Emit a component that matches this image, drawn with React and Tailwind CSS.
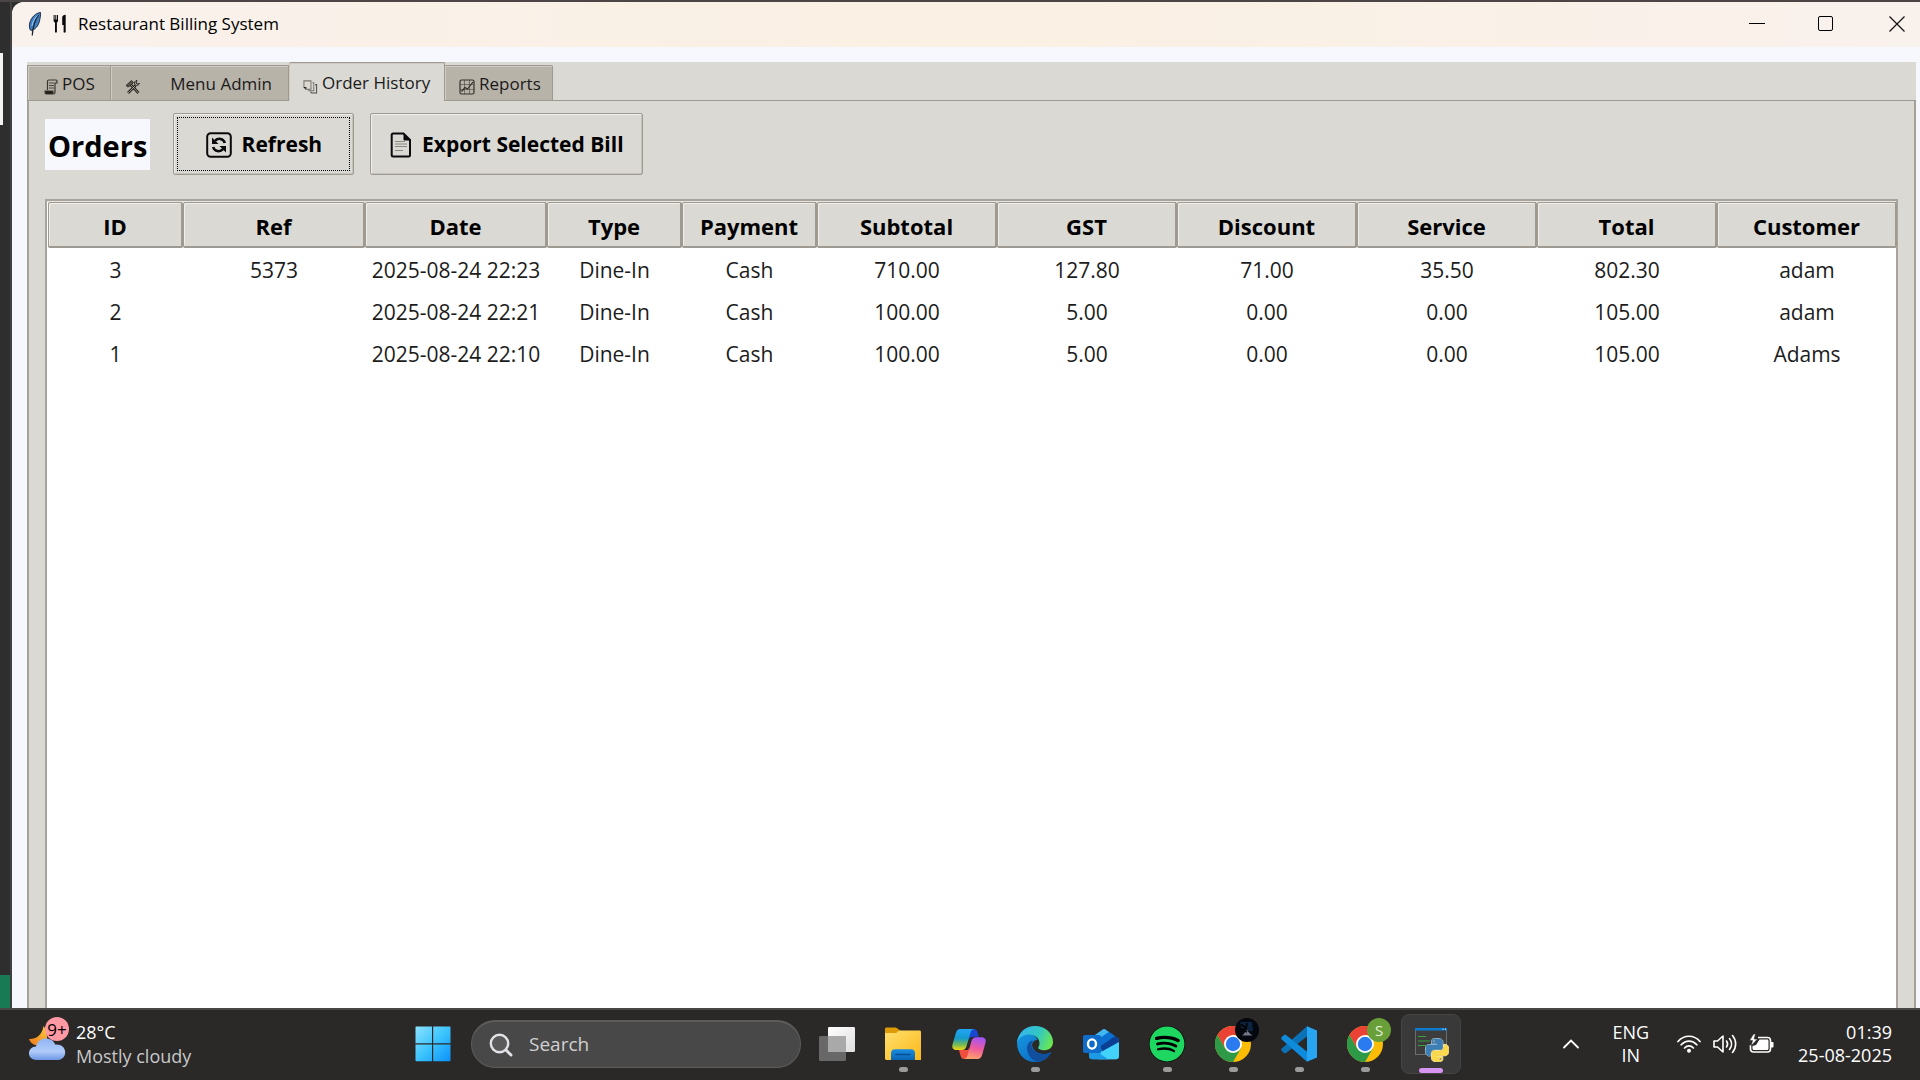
import { FaSpotify } from "react-icons/fa";

const columns = [
  { name: "ID", width: "w-[135px]" },
  { name: "Ref", width: "w-[182px]" },
  { name: "Date", width: "w-[182px]" },
  { name: "Type", width: "w-[135px]" },
  { name: "Payment", width: "w-[135px]" },
  { name: "Subtotal", width: "w-[180px]" },
  { name: "GST", width: "w-[180px]" },
  { name: "Discount", width: "w-[180px]" },
  { name: "Service", width: "w-[180px]" },
  { name: "Total", width: "w-[180px]" },
  { name: "Customer", width: "w-[180px]" },
];

const orders = [
  ["3", "5373", "2025-08-24 22:23", "Dine-In", "Cash", "710.00", "127.80", "71.00", "35.50", "802.30", "adam"],
  ["2", "", "2025-08-24 22:21", "Dine-In", "Cash", "100.00", "5.00", "0.00", "0.00", "105.00", "adam"],
  ["1", "", "2025-08-24 22:10", "Dine-In", "Cash", "100.00", "5.00", "0.00", "0.00", "105.00", "Adams"],
];

/* ---------- title bar and tab icons ---------- */

function FeatherIcon() {
  return (
    <svg width="14" height="24" viewBox="0 0 14 24" aria-hidden="true">
      <path d="M12.5 0.5C8 1 3.5 5 2 10c-.9 3-.8 5.500.3 8l1.500.5C9 16.500 11 12 11.800 7.500 12.200 5 12.800 3 12.500.5Z" fill="#3f7fc4" stroke="#24303f" strokeWidth="1" />
      <path d="M10.500 3C7 8 4.800 13 4.300 23.500" fill="none" stroke="#1c2430" strokeWidth="1.300" />
      <path d="M9.500 3.500C6.500 6.500 4.500 10 4 14" fill="none" stroke="#9cc8f4" strokeWidth="1" />
    </svg>
  );
}

function CutleryIcon() {
  return (
    <svg width="14" height="20" viewBox="0 0 14 20" fill="#0a0a0a" aria-hidden="true">
      <path d="M0.600 1h1v4.500h.7V1h1v4.500h.7V1h1v5.500c0 1-.5 1.600-1.100 2v9.300c0 1.200-1.900 1.200-1.900 0V8.500c-.8-.4-1.400-1-1.400-2Z" />
      <path d="M9.200 3.500C9.200 2 10.500 1 12.700.8v17c0 1.200-2.100 1.200-2.100 0V11H9.200Z" />
    </svg>
  );
}

function ReceiptIcon() {
  return (
    <svg width="14" height="16" viewBox="0 0 14 16" fill="none" stroke="#3a362f" strokeWidth="1.200" aria-hidden="true">
      <path d="M3.500 11V2.500C3.500 1.600 4 1 5 1h7c.7 0 1 .5 1 1.200V4h-2v9c0 1.200-.5 2-1.500 2" />
      <path d="M5 4h5M5 6.500h5M5 9h5" strokeWidth="0.900" />
      <path d="M1 12h8v3H2.300C1.400 15 1 14 1 12Z" fill="#1f1c18" />
    </svg>
  );
}

function ToolsIcon() {
  return (
    <svg width="16" height="16" viewBox="0 0 16 16" fill="none" stroke="#26231f" aria-hidden="true">
      <path d="M5.500 5.500 13.500 14M10.500 6.500 3 14" strokeWidth="2.600" />
      <path d="M5.500 5.500 13.500 14M10 7 3 14" stroke="#b8b3a9" strokeWidth="0.800" />
      <path d="M1 6.500 6.500 1.500 8.500 3.500 6 6 3 8Z" fill="#5b564e" strokeWidth="0.900" />
      <path d="M12 1.500c-2 .3-3 2-2.300 3.800.8 1.500 3.500 1.700 4.800-.8L12.300 5 11 4Z" strokeWidth="1" />
    </svg>
  );
}

function PagesIcon() {
  return (
    <svg width="15" height="15" viewBox="0 0 16 16" fill="none" stroke="#7b776f" strokeWidth="1.100" aria-hidden="true">
      <path d="M1 2h7.500v9H3L1 9Z" />
      <path d="M10 4h1.500v8.500H6.500L5 11" />
      <path d="M13 6h1.500v9H9l-1-1.500" stroke="#54514b" />
      <path d="M1 9h2v2" stroke="#26231f" />
    </svg>
  );
}

function ChartIcon() {
  return (
    <svg width="16" height="16" viewBox="0 0 16 16" fill="none" stroke="#34312c" aria-hidden="true">
      <rect x="1" y="1" width="14" height="14" rx="1.500" strokeWidth="1.200" />
      <path d="M1 5.500h14M1 10.500h14M5.500 1v14M10.500 1v14" strokeWidth="0.500" />
      <path d="M2.500 12.500 6 8.500 8.500 10 14 3" strokeWidth="1.200" />
    </svg>
  );
}

function RefreshIcon() {
  return (
    <svg width="26" height="26" viewBox="0 0 26 26" fill="none" stroke="#0b0b0b" aria-hidden="true">
      <rect x="1.200" y="1.200" width="23.600" height="23.600" rx="3.500" strokeWidth="2" />
      <path d="M9 8.800C12 5.600 17.500 6.300 18.800 11" strokeWidth="2.600" />
      <path d="M17 17.200c-3 3.200-8.500 2.500-9.800-2.200" strokeWidth="2.600" />
      <path d="M6 5.500V12h6.500ZM20 20.500V14h-6.500Z" fill="#0b0b0b" stroke="none" />
    </svg>
  );
}

function PageIcon() {
  return (
    <svg width="22" height="26" viewBox="0 0 22 26" fill="none" stroke="#0b0b0b" aria-hidden="true">
      <path d="M3.200 1.500h10.300L20 8v15c0 .9-.6 1.500-1.500 1.500H3.200c-.9 0-1.500-.6-1.500-1.500V3c0-.9.6-1.500 1.500-1.500Z" strokeWidth="2" />
      <path d="M14 2v6h6Z" fill="#0b0b0b" strokeWidth="1" />
      <path d="M5 9.500h10M5 12h12M5 14.500h12M5 18.500h8" stroke="#8b8882" strokeWidth="1.200" />
    </svg>
  );
}

/* ---------- taskbar icons ---------- */

function WeatherIcon() {
  return (
    <svg width="37" height="44" viewBox="0 0 37 44" aria-hidden="true">
      <defs>
        <linearGradient id="cloud" x1="0" y1="0" x2="0" y2="1">
          <stop offset="0" stopColor="#8fb4f2" />
          <stop offset="0.600" stopColor="#b0cbfa" />
          <stop offset="1" stopColor="#6f97e6" />
        </linearGradient>
        <linearGradient id="moon" x1="0" y1="1" x2="1" y2="0">
          <stop offset="0" stopColor="#f07a1c" />
          <stop offset="1" stopColor="#fcc93a" />
        </linearGradient>
      </defs>
      <path d="M14.500 9c3 3 4.500 12 3 19H6C3 27 1 25 0 22c6 .5 13-3 14.500-13Z" fill="url(#moon)" />
      <path d="M7.500 43C3 43 0 40.200 0 36.300c0-3.600 2.900-6.600 7-6.700C8 24.600 12 21.500 16.800 21.500c4.500 0 8 2.300 9.400 6 5.800-.6 10 2.800 10 7.700 0 4.600-3.200 7.800-8 7.800Z" fill="url(#cloud)" />
    </svg>
  );
}

function StartIcon() {
  return (
    <svg width="36" height="36" viewBox="0 0 36 36" aria-hidden="true">
      <defs>
        <linearGradient id="start" x1="0" y1="0" x2="36" y2="36" gradientUnits="userSpaceOnUse">
          <stop offset="0" stopColor="#8fe3ff" />
          <stop offset="0.500" stopColor="#3cc4fd" />
          <stop offset="1" stopColor="#0a8ffb" />
        </linearGradient>
      </defs>
      <path d="M1.500.5H17v16.700H.5V1.500c0-.6.4-1 1-1ZM18.200.5h16.300c.6 0 1 .4 1 1v15.700H18.200ZM.5 18.500H17v16.800H1.500c-.6 0-1-.4-1-1ZM18.200 18.500h17.300v15.800c0 .6-.4 1-1 1H18.200Z" fill="url(#start)" />
    </svg>
  );
}

function SearchIcon() {
  return (
    <svg className="shrink-0" width="24" height="24" viewBox="0 0 24 24" fill="none" stroke="#e2e2e6" aria-hidden="true">
      <circle cx="10.500" cy="10.500" r="8.700" fill="#5a5a5a" strokeWidth="2.400" />
      <path d="m17 17 5 5" strokeWidth="3" strokeLinecap="round" />
    </svg>
  );
}

function TaskViewIcon() {
  return (
    <svg width="36" height="36" viewBox="0 0 36 36" aria-hidden="true">
      <defs>
        <linearGradient id="pane" x1="0" y1="0" x2="1" y2="1">
          <stop offset="0" stopColor="#ffffff" />
          <stop offset="1" stopColor="#dedede" />
        </linearGradient>
      </defs>
      <rect x="9" y="1" width="27" height="25" rx="1.200" fill="url(#pane)" />
      <rect x="0" y="10" width="27" height="25" rx="1.200" fill="#686868" />
      <path d="M9 10h18v16H9Z" fill="#a9a9a9" />
    </svg>
  );
}

function ExplorerIcon() {
  return (
    <svg width="36" height="36" viewBox="0 0 36 36" aria-hidden="true">
      <defs>
        <linearGradient id="folder" x1="0" y1="0" x2="1" y2="1">
          <stop offset="0" stopColor="#ffdf70" />
          <stop offset="1" stopColor="#fbb816" />
        </linearGradient>
        <linearGradient id="folderdock" x1="0" y1="0" x2="0" y2="1">
          <stop offset="0" stopColor="#1a8de0" />
          <stop offset="1" stopColor="#0a64b4" />
        </linearGradient>
      </defs>
      <path d="M0 9V3c0-1 .6-1.600 1.500-1.600h8.800c.8 0 1.300.2 1.900.8L15 4.500V9Z" fill="#dd9b05" />
      <path d="M0 7h11l3.500-2.600h20c.9 0 1.500.6 1.500 1.500V34H1.500C.6 34 0 33.500 0 32.600Z" fill="url(#folder)" />
      <path d="M6 34v-7c0-2.200 1.600-3.700 3.800-3.700h16.400c2.200 0 3.800 1.500 3.800 3.700v7Z" fill="url(#folderdock)" />
      <path d="M11 28.500h14" stroke="#074f92" strokeWidth="1.600" strokeLinecap="round" />
    </svg>
  );
}

function CopilotIcon() {
  return (
    <svg width="36" height="36" viewBox="0 0 36 36" aria-hidden="true">
      <defs>
        <linearGradient id="cpleft" x1="0" y1="0" x2="0" y2="1">
          <stop offset="0" stopColor="#22a5f7" />
          <stop offset="0.450" stopColor="#159bc9" />
          <stop offset="0.750" stopColor="#75bb51" />
          <stop offset="1" stopColor="#f5d517" />
        </linearGradient>
        <linearGradient id="cpright" x1="0.600" y1="0" x2="0.400" y2="1">
          <stop offset="0" stopColor="#a455f7" />
          <stop offset="0.500" stopColor="#ee5a9e" />
          <stop offset="1" stopColor="#ffa06a" />
        </linearGradient>
      </defs>
      <path d="M18 3h5c2 0 3 1.500 3.500 3.200l1.300 4.600h-5c-3 0-4 1.500-5 4.500Z" fill="#1947d2" />
      <path d="M18 33h-5c-2 0-3-1.500-3.500-3.200L8 24h5c3 0 4-1.500 5-4.500Z" fill="#f04f3e" />
      <path d="M9.500 3H23c-2 .3-3 1.700-3.700 4.200l-3.500 12.300c-.8 3-2.300 4.500-5 4.500H5.500C2 24 .6 21.600 1.500 18.500L4.800 7.200C5.600 4.500 7 3 9.500 3Z" fill="url(#cpleft)" />
      <path d="M26.500 33H13c2-.3 3-1.700 3.700-4.200l3.500-13c.8-3 2.300-4.500 5-4.500h5.300c3.500 0 4.900 2.400 4 5.500l-3.300 12c-.8 2.700-2.200 4.200-4.700 4.200Z" fill="url(#cpright)" />
      <path d="M18.800 11.500h3.200c-1.200.8-1.700 2-2.200 4L17.200 24h-3.600c1.200-.8 1.800-2 2.300-4Z" fill="#2a2928" />
    </svg>
  );
}

function EdgeIcon() {
  return (
    <svg width="36" height="36" viewBox="0 0 36 36" aria-hidden="true">
      <defs>
        <linearGradient id="edgetop" x1="0" y1="0.300" x2="1" y2="0.600">
          <stop offset="0" stopColor="#35b4f0" />
          <stop offset="0.550" stopColor="#31c7c3" />
          <stop offset="1" stopColor="#6be84f" />
        </linearGradient>
        <linearGradient id="edgemain" x1="0" y1="0" x2="1" y2="1">
          <stop offset="0" stopColor="#1696e0" />
          <stop offset="1" stopColor="#0965bf" />
        </linearGradient>
      </defs>
      <path d="M0 17C0 10 5 8 12 8c4 0 7 2.500 8.500 6-3 0-5.500 2-5.500 5.500 1 5 6 8.500 11.500 8.500 3 0 5-.9 6.300-1.600.8-.3 1.100.3.700 1C30.500 32.500 25.500 36 18 36 8 36 0 28.500 0 17Z" fill="url(#edgemain)" />
      <path d="M10 22c0 7 5.500 13 11 13.700 5-.7 9.500-3.700 12.500-8.300.4-.7.100-1.300-.7-1C31.500 27.100 29.500 28 26.500 28 21 28 14.500 24.500 14.500 19c0-1.800.5-3 1.500-4.500-3.500.5-6 3.500-6 7.500Z" fill="#104f9e" />
      <path d="M0 17C.8 7 8 0 18 0c10.500 0 18 7.500 18 16 0 5-3.600 8.200-8.300 8.200-4 0-6.500-1.200-6.500-2.500 0-.8 1.300-1.400 1.300-4.200C22.500 12 18 8.500 12 8.500 5.500 8.500 1 13 0 17Z" fill="url(#edgetop)" />
    </svg>
  );
}

function OutlookIcon() {
  return (
    <svg width="36" height="36" viewBox="0 0 36 36" aria-hidden="true">
      <path d="M6 14 19.500 3.700c1-.8 2-.8 3 0L36 13v17c0 2-1.300 3.300-3.200 3.300H9.200C7.300 33.300 6 32 6 30Z" fill="#1490df" />
      <path d="m12 9 7.500-5.300c1-.8 2-.8 3 0L26 6 14 14Z" fill="#43b7f2" />
      <path d="m26 6 6 4-15 10.500V12Z" fill="#0a6fd0" />
      <path d="m32 10 3 2c.7.6 1 1.200 1 2v3L20 27l-3-6.500Z" fill="#0a3f94" />
      <path d="M36 16v14c0 2-1.300 3.300-3.200 3.300H15L18 26Z" fill="#43d3fa" />
      <path d="M6 27h10l9 6.300H9.200C7.300 33.300 6 32 6 30Z" fill="#1c9ae4" />
      <rect x="0" y="9" width="18" height="18" rx="1.800" fill="#0f6cc8" />
      <ellipse cx="9" cy="18" rx="4" ry="4.600" fill="none" stroke="#fff" strokeWidth="2.400" />
    </svg>
  );
}

function SpotifyIcon() {
  return (
    <span className="flex rounded-full bg-black">
      <FaSpotify size={36} color="#1ed760" aria-hidden="true" />
    </span>
  );
}

function ChromeIcon() {
  return (
    <svg width="36" height="36" viewBox="0 0 36 36" aria-hidden="true">
      <circle cx="18" cy="18" r="18" fill="#fbbc05" />
      <path d="M2.400 9A18 18 0 0 1 33.600 9H18L10.200 22.500Z" fill="#ea4335" />
      <path d="M2.400 9A18 18 0 0 0 18 36l7.800-13.500H10.200Z" fill="#2e9a48" />
      <circle cx="18" cy="18" r="9" fill="#fff" />
      <circle cx="18" cy="18" r="7.200" fill="#2b7bf0" />
    </svg>
  );
}

function VsCodeIcon() {
  return (
    <svg width="36" height="36" viewBox="0 0 36 36" aria-hidden="true">
      <path d="M26 .3 27 9.500 5 27c-.6.500-1.400.500-2 0L.8 25c-.8-.7-.8-1.700 0-2.400Z" fill="#0b72b8" />
      <path d="M26 35.700 27 26.500 5 9c-.6-.5-1.400-.5-2 0L.8 11c-.8.700-.8 1.700 0 2.400Z" fill="#0f8bdc" />
      <path d="M26 .3 36 4.500v27L26 35.700Z" fill="#27a5f2" />
    </svg>
  );
}

const pythonHalf =
  "M14.250.18l.9.2.73.26.59.3.45.32.34.34.25.34.16.33.1.3.04.26.02.2-.01.13V8.500l-.05.63-.13.55-.21.46-.26.38-.3.31-.33.25-.35.19-.35.14-.33.1-.3.07-.26.04-.21.02H8.770l-.69.05-.59.14-.5.22-.41.27-.33.32-.27.35-.2.36-.15.37-.1.35-.07.32-.04.27-.02.21v3.060H3.170l-.21-.03-.28-.07-.32-.12-.35-.18-.36-.26-.36-.36-.35-.46-.32-.59-.28-.73-.21-.88-.14-1.050-.05-1.230.06-1.220.16-1.040.24-.87.32-.71.36-.57.4-.44.42-.33.42-.24.4-.16.36-.1.32-.05.24-.01h.16l.06.01h8.160v-.83H6.180l-.01-2.750-.02-.37.05-.34.11-.31.17-.28.25-.26.31-.23.38-.2.44-.18.51-.15.58-.12.64-.1.71-.06.77-.04.84-.02 1.270.05zm-6.300 1.980l-.23.33-.08.41.08.41.23.34.33.22.41.09.41-.09.33-.22.23-.34.08-.41-.08-.41-.23-.33-.33-.22-.41-.09-.41.09z";

function PythonAppIcon() {
  return (
    <svg width="36" height="36" viewBox="0 0 36 36" aria-hidden="true">
      <rect x="2.500" y="2.500" width="31" height="26" fill="#3d3d3d" stroke="#6d6d6d" />
      <path d="M2 2h32v2.500H2Z" fill="#0a7bd0" />
      <path d="M29.500 3.200h1M32 3.200h1" stroke="#fff" strokeWidth="1" />
      <path d="M5 10.500h8M5 15h12M5 19.500h8" stroke="#3aa03f" strokeWidth="1.200" />
      <g transform="translate(12.500 12.500) scale(0.970)">
        <path d={pythonHalf} fill="#3d7fb5" stroke="#e8eef2" strokeWidth="1" paintOrder="stroke" />
        <path d={pythonHalf} fill="#fcd94c" stroke="#f7f3dc" strokeWidth="1" paintOrder="stroke" transform="rotate(180 12 12)" />
      </g>
    </svg>
  );
}

function ChevronUpIcon() {
  return (
    <svg width="18" height="12" viewBox="0 0 18 12" fill="none" stroke="#fff" strokeWidth="1.800" strokeLinecap="round" aria-hidden="true">
      <path d="m2 9.500 7-7 7 7" />
    </svg>
  );
}

function WifiIcon() {
  return (
    <svg width="24" height="20" viewBox="0 0 24 20" fill="none" stroke="#fff" strokeWidth="1.700" strokeLinecap="round" aria-hidden="true">
      <path d="M1 7.500C7 .5 17 .5 23 7.500M4.200 10.800c4.500-5 11.100-5 15.600 0M7.600 14c2.600-2.800 6.200-2.800 8.800 0" />
      <circle cx="12" cy="16.800" r="2" fill="#fff" stroke="none" />
    </svg>
  );
}

function SpeakerIcon() {
  return (
    <svg width="24" height="20" viewBox="0 0 24 20" fill="none" stroke="#fff" strokeWidth="1.600" strokeLinecap="round" strokeLinejoin="round" aria-hidden="true">
      <path d="M1 7h3.500L10 2v16l-5.500-5H1Z" />
      <path d="M13.500 7c1.300 1.800 1.300 4.200 0 6M16.500 4.500c2.700 3.300 2.700 7.700 0 11M19.500 1.500c4.200 5 4.200 12 0 17" />
    </svg>
  );
}

function BatteryIcon() {
  return (
    <svg width="25" height="20" viewBox="0 0 25 20" aria-hidden="true">
      <path d="M9 3.500h9.500c1.700 0 3 1.300 3 3V15c0 1.700-1.300 3-3 3h-14c-1.700 0-3-1.300-3-3v-4" fill="none" stroke="#fff" strokeWidth="1.600" />
      <path d="M22 8h1.500c.6 0 1 .4 1 1v3.500c0 .6-.4 1-1 1H22Z" fill="#fff" />
      <path d="M10.500 5.500H18c1 0 1.500.6 1.500 1.500v7.500c0 .9-.6 1.500-1.500 1.500H5c-.9 0-1.500-.6-1.500-1.500V12L7 11Z" fill="#fff" />
      <path d="M4.500 0 .5 6.500h3L2 12 8.500 5H5.200L6.500 0Z" fill="#fff" stroke="#2a2928" strokeWidth="0.600" />
    </svg>
  );
}

/* ---------- application window ---------- */

function TitleBar() {
  return (
    <header className="flex h-[45px] shrink-0 items-center justify-between bg-linear-to-r from-[#f9f1ec] via-[#faf0e3] to-[#f9f1ec] pl-4">
      <div className="flex items-center gap-[11px] pb-0.5">
        <FeatherIcon />
        <CutleryIcon />
        <h1 className="text-[17px] leading-6 text-black">Restaurant Billing System</h1>
      </div>
      <div className="flex h-full pb-0.5">
        <button type="button" aria-label="Minimize" className="flex w-[69px] items-center justify-center">
          <span className="h-px w-4 bg-black" />
        </button>
        <button type="button" aria-label="Maximize" className="flex w-[69px] items-center justify-center">
          <span className="size-[15px] rounded-xs border border-black" />
        </button>
        <button type="button" aria-label="Close" className="flex w-[60px] items-center justify-center pl-3.5">
          <svg width="16" height="16" viewBox="0 0 16 16" stroke="#111" strokeWidth="1.200" aria-hidden="true">
            <path d="m.5.5 15 15M15.500.5l-15 15" />
          </svg>
        </button>
      </div>
    </header>
  );
}

const tabBase = "flex items-center border border-b-0 border-[#9e9a91] pt-0.5 text-[17px] text-[#1a1a1a] shadow-[inset_1px_1px_0_#cfcbc3]";

function Tabs() {
  return (
    <div role="tablist" className="flex h-[39px] items-end border-b border-[#9e9a91] bg-[#dad9d4]">
      <button type="button" role="tab" aria-selected="false" className={`${tabBase} h-[35px] w-[84px] gap-1 bg-[#b8b3a9] pl-4`}>
        <span className="pt-1.5"><ReceiptIcon /></span>
        POS
      </button>
      <button type="button" role="tab" aria-selected="false" className={`${tabBase} h-[35px] w-[178px] justify-between border-l-0 bg-[#b8b3a9] pr-4 pl-3.5`}>
        <span className="pt-1.5"><ToolsIcon /></span>
        Menu Admin
      </button>
      <button type="button" role="tab" aria-selected="true" className={`${tabBase} relative top-px h-[39px] w-[156px] gap-1 rounded-t-xs border-l-0 bg-[#dad9d4] pl-3.5`}>
        <span className="pt-1.5"><PagesIcon /></span>
        Order History
      </button>
      <button type="button" role="tab" aria-selected="false" className={`${tabBase} h-[35px] w-[108px] gap-1 rounded-tr-xs border-l-0 bg-[#b8b3a9] pl-3.5`}>
        <span className="pt-1.5"><ChartIcon /></span>
        Reports
      </button>
    </div>
  );
}

const actionButton =
  "flex h-[62px] items-center rounded-xs border border-[#9e9a91] bg-[#dad9d4] p-[3px] text-[21px] font-bold text-black shadow-[inset_1px_1px_0_#efeeea,inset_-1px_-1px_0_#c6c3bb]";

function Toolbar() {
  return (
    <div className="flex items-center px-4 pt-3">
      <h2 className="mr-[23px] flex h-[51px] items-center bg-[#f6f8fd] px-[3px] pt-1 text-[29px] font-bold text-black">Orders</h2>
      <button type="button" className={`${actionButton} mr-4 w-[181px]`}>
        <span className="flex h-full w-full items-center justify-center gap-2.5 border border-dotted border-black pt-0.5">
          <RefreshIcon />
          Refresh
        </span>
      </button>
      <button type="button" className={`${actionButton} w-[273px] justify-center gap-2.5 pt-1`}>
        <PageIcon />
        Export Selected Bill
      </button>
    </div>
  );
}

function OrdersTable() {
  return (
    <div className="mx-4 mt-6 min-h-0 flex-1 border-x-2 border-t-2 border-[#a8a49b] bg-white">
      <div className="border-t border-[#e8e6e1] px-px">
        <table className="w-full table-fixed border-separate border-spacing-0 text-center text-[21px] text-[#1c1c1c]">
          <thead>
            <tr className="h-[46px] bg-[#dad9d4] text-[22px] text-black">
              {columns.map((c) => (
                <th key={c.name} scope="col" className={`${c.width} rounded-xs border border-r-2 border-b-2 border-[#9e9a91] p-0 pt-1 font-bold shadow-[inset_1px_1px_0_#efeeea]`}>
                  {c.name}
                </th>
              ))}
            </tr>
          </thead>
          <tbody>
            {orders.map((row) => (
              <tr key={row[0]} className="h-[42px]">
                {row.map((value, i) => (
                  <td key={columns[i].name} className="overflow-hidden px-1.5 pt-1 pb-0 whitespace-nowrap">
                    <div className="overflow-hidden">{value}</div>
                  </td>
                ))}
              </tr>
            ))}
          </tbody>
        </table>
      </div>
    </div>
  );
}

function BillingWindow() {
  return (
    <main className="flex min-w-0 flex-1 flex-col overflow-hidden rounded-tl-xl bg-[#f6f8fd]">
      <TitleBar />
      <div className="mt-[15px] mr-1 ml-[15px] flex min-h-0 flex-1 flex-col">
        <Tabs />
        <div role="tabpanel" className="flex min-h-0 flex-1 flex-col border-x-2 border-[#a5a198] bg-[#dad9d4]">
          <Toolbar />
          <OrdersTable />
        </div>
      </div>
    </main>
  );
}

/* ---------- taskbar ---------- */

function TaskButton({ label, running, active, badge, children }) {
  return (
    <button
      type="button"
      aria-label={label}
      className={`relative flex size-[60px] shrink-0 items-center justify-center rounded-lg ${active ? "border border-[#454545] bg-[#393939]" : ""}`}
    >
      {children}
      {badge}
      {running && <span className="absolute inset-x-0 bottom-0.5 mx-auto h-[5px] w-[9px] rounded-full bg-[#9b9b9b]" />}
      {active && <span className="absolute inset-x-0 bottom-0 mx-auto h-[5px] w-6 rounded-full bg-[#d794f2]" />}
    </button>
  );
}

function Taskbar() {
  return (
    <footer className="flex h-[72px] shrink-0 items-center border-t-2 border-[#474745] bg-[#2a2928] pr-8 pb-0.5 text-white">
      <div className="flex flex-1 items-center">
        <button type="button" className="flex items-center gap-2.5 pl-[29px] text-left text-[18px]">
          <span className="relative pb-2.5">
            <WeatherIcon />
            <span className="absolute top-0 left-4 flex size-6 items-center justify-center rounded-full bg-[#ff99a4] text-[17px] leading-none text-black">9+</span>
          </span>
          <span className="leading-6">
            <span className="block">28°C</span>
            <span className="block text-[#c8c8c8]">Mostly cloudy</span>
          </span>
        </button>
      </div>

      <nav aria-label="Taskbar" className="mr-6 flex items-center gap-1.5">
        <TaskButton label="Start"><StartIcon /></TaskButton>
        <label className="ml-0.5 flex h-12 w-[330px] items-center gap-4 rounded-full border border-t-2 border-[#5c5c5c] bg-[#484848] px-[17px]">
          <SearchIcon />
          <input type="search" placeholder="Search" aria-label="Search" className="w-full min-w-0 bg-transparent text-[19px] outline-none placeholder:text-[#d0d0d0]" />
        </label>
        <TaskButton label="Task view"><TaskViewIcon /></TaskButton>
        <TaskButton label="File Explorer" running><ExplorerIcon /></TaskButton>
        <TaskButton label="Copilot"><CopilotIcon /></TaskButton>
        <TaskButton label="Edge" running><EdgeIcon /></TaskButton>
        <TaskButton label="Outlook"><OutlookIcon /></TaskButton>
        <TaskButton label="Spotify" running><SpotifyIcon /></TaskButton>
        <TaskButton
          label="Chrome"
          running
          badge={
            <span className="absolute top-1 right-1 flex size-6 items-end justify-center overflow-hidden rounded-full bg-[#04070d]">
              <svg width="24" height="24" viewBox="0 0 24 24" aria-hidden="true">
                <path d="M5 4h12l1 9H7Z" fill="#0c2440" />
                <path d="M7 17.500c2-1 3-4 5-5.500 1.500 2 3 4 5.500 5.500Z" fill="#737987" />
                <path d="m6 6 5 4M12 5l-1 6-4 .5 5 2.500" stroke="#020305" strokeWidth="1.800" fill="none" />
              </svg>
            </span>
          }
        >
          <ChromeIcon />
        </TaskButton>
        <TaskButton label="Visual Studio Code" running><VsCodeIcon /></TaskButton>
        <TaskButton
          label="Chrome, profile S"
          running
          badge={
            <span className="absolute top-1 right-1 flex size-6 items-center justify-center rounded-full bg-[#689f38] text-[15px] leading-none text-[#e6efdc]">S</span>
          }
        >
          <ChromeIcon />
        </TaskButton>
        <TaskButton label="Python" active><PythonAppIcon /></TaskButton>
      </nav>

      <div className="flex flex-1 items-center justify-end text-[18px] leading-[23px]">
        <button type="button" aria-label="Show hidden icons" className="mr-8"><ChevronUpIcon /></button>
        <button type="button" className="mr-7 text-center">
          <span className="block">ENG</span>
          <span className="block">IN</span>
        </button>
        <button type="button" aria-label="Network, volume and battery" className="mr-6 flex gap-3">
          <WifiIcon />
          <SpeakerIcon />
          <BatteryIcon />
        </button>
        <button type="button" className="-mr-1 text-right">
          <time className="block">01:39</time>
          <time className="block">25-08-2025</time>
        </button>
      </div>
    </footer>
  );
}

export default function App() {
  return (
    <div className="flex h-screen flex-col overflow-hidden bg-[#2f2e2e] font-['Open_Sans','Noto_Sans',sans-serif]">
      <div className="flex min-h-0 flex-1 border-t-2 border-[#4b4645]">
        <div className="flex w-3 shrink-0 flex-col justify-between border-r-2 border-[#414141] pt-[51px]">
          <div className="h-[72px] w-[3px] bg-[#f3f3f3]" />
          <div className="h-[33px] bg-[#187a55]" />
        </div>
        <BillingWindow />
      </div>
      <Taskbar />
    </div>
  );
}
